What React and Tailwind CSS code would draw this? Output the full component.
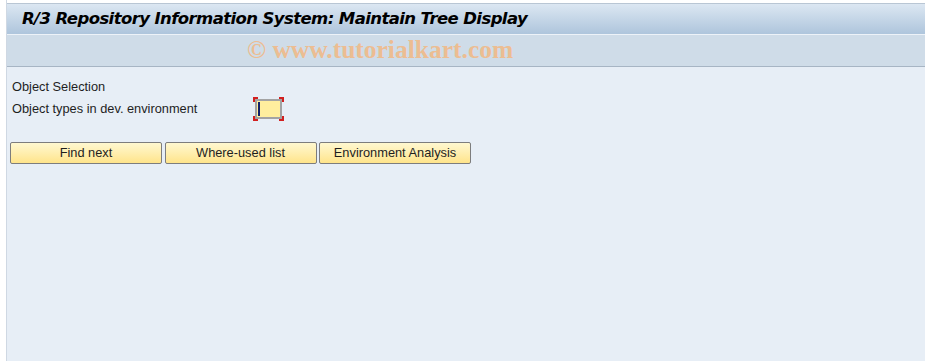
import React from 'react';

const buttons = ['Find next', 'Where-used list', 'Environment Analysis'];

const App = () => {
  return (
    <div className="flex h-[361px] w-[925px] overflow-hidden bg-white font-['Liberation_Sans',sans-serif]">
      {/* left white margin */}
      <div className="w-[6px] shrink-0 bg-white" />
      <div className="flex min-w-0 flex-1 flex-col border-l border-[#cfd8e3] bg-[#e7eef6]">
        {/* title bar */}
        <div className="h-[3px] bg-white" />
        <div className="flex h-[31px] items-center border-t border-[#b9c6d4] bg-gradient-to-b from-[#dce7f2] to-[#aec5dc] pl-[15px]">
          <h1 className="text-[16.5px] font-bold italic text-black font-['DejaVu_Sans',sans-serif] tracking-[-0.6px]">
            R/3 Repository Information System: Maintain Tree Display
          </h1>
        </div>

        {/* toolbar band with watermark */}
        <div className="flex h-[33px] items-center border-t border-[#edf2f8] border-b border-b-[#a7b5c4] bg-[#cfdce8] pl-[240px]">
          <span className="text-[25.5px] font-bold text-[#ecbd92] font-['Liberation_Serif',serif]">
            © www.tutorialkart.com
          </span>
        </div>

        {/* content */}
        <div className="flex flex-col px-[5px] pt-[11px] text-[12.8px] text-[#1e1e1e]">
          <div className="h-[18px] leading-[18px]">Object Selection</div>
          <div className="flex h-[26px] items-center">
            <span className="w-[241px]">Object types in dev. environment</span>
            <div className="relative h-[24px] w-[31px]">
              <span className="absolute left-0 top-0 h-[5px] w-[5px] border-l-2 border-t-2 border-[#d21f1f]" />
              <span className="absolute right-0 top-0 h-[5px] w-[5px] border-r-2 border-t-2 border-[#d21f1f]" />
              <span className="absolute bottom-0 left-0 h-[5px] w-[5px] border-b-2 border-l-2 border-[#d21f1f]" />
              <span className="absolute bottom-0 right-0 h-[5px] w-[5px] border-b-2 border-r-2 border-[#d21f1f]" />
              <div className="absolute left-[2px] top-[2px] flex h-[20px] w-[27px] items-center border-2 border-[#a3a3a3] bg-[#ffee9e] pl-[1px]">
                <span className="h-[14px] w-[2px] bg-[#10206a]" />
              </div>
            </div>
          </div>

          <div className="-ml-[2px] mt-[20px] flex gap-[2.5px]">
            {buttons.map((b) => (
              <button
                key={b}
                className="h-[22px] w-[152px] rounded-[2px] border border-[#7d7d7d] bg-gradient-to-b from-[#fff8d0] to-[#ffe48a] text-center text-[12.8px] text-[#1e1e1e]"
              >
                {b}
              </button>
            ))}
          </div>
        </div>
      </div>
    </div>
  );
};

export default App;
